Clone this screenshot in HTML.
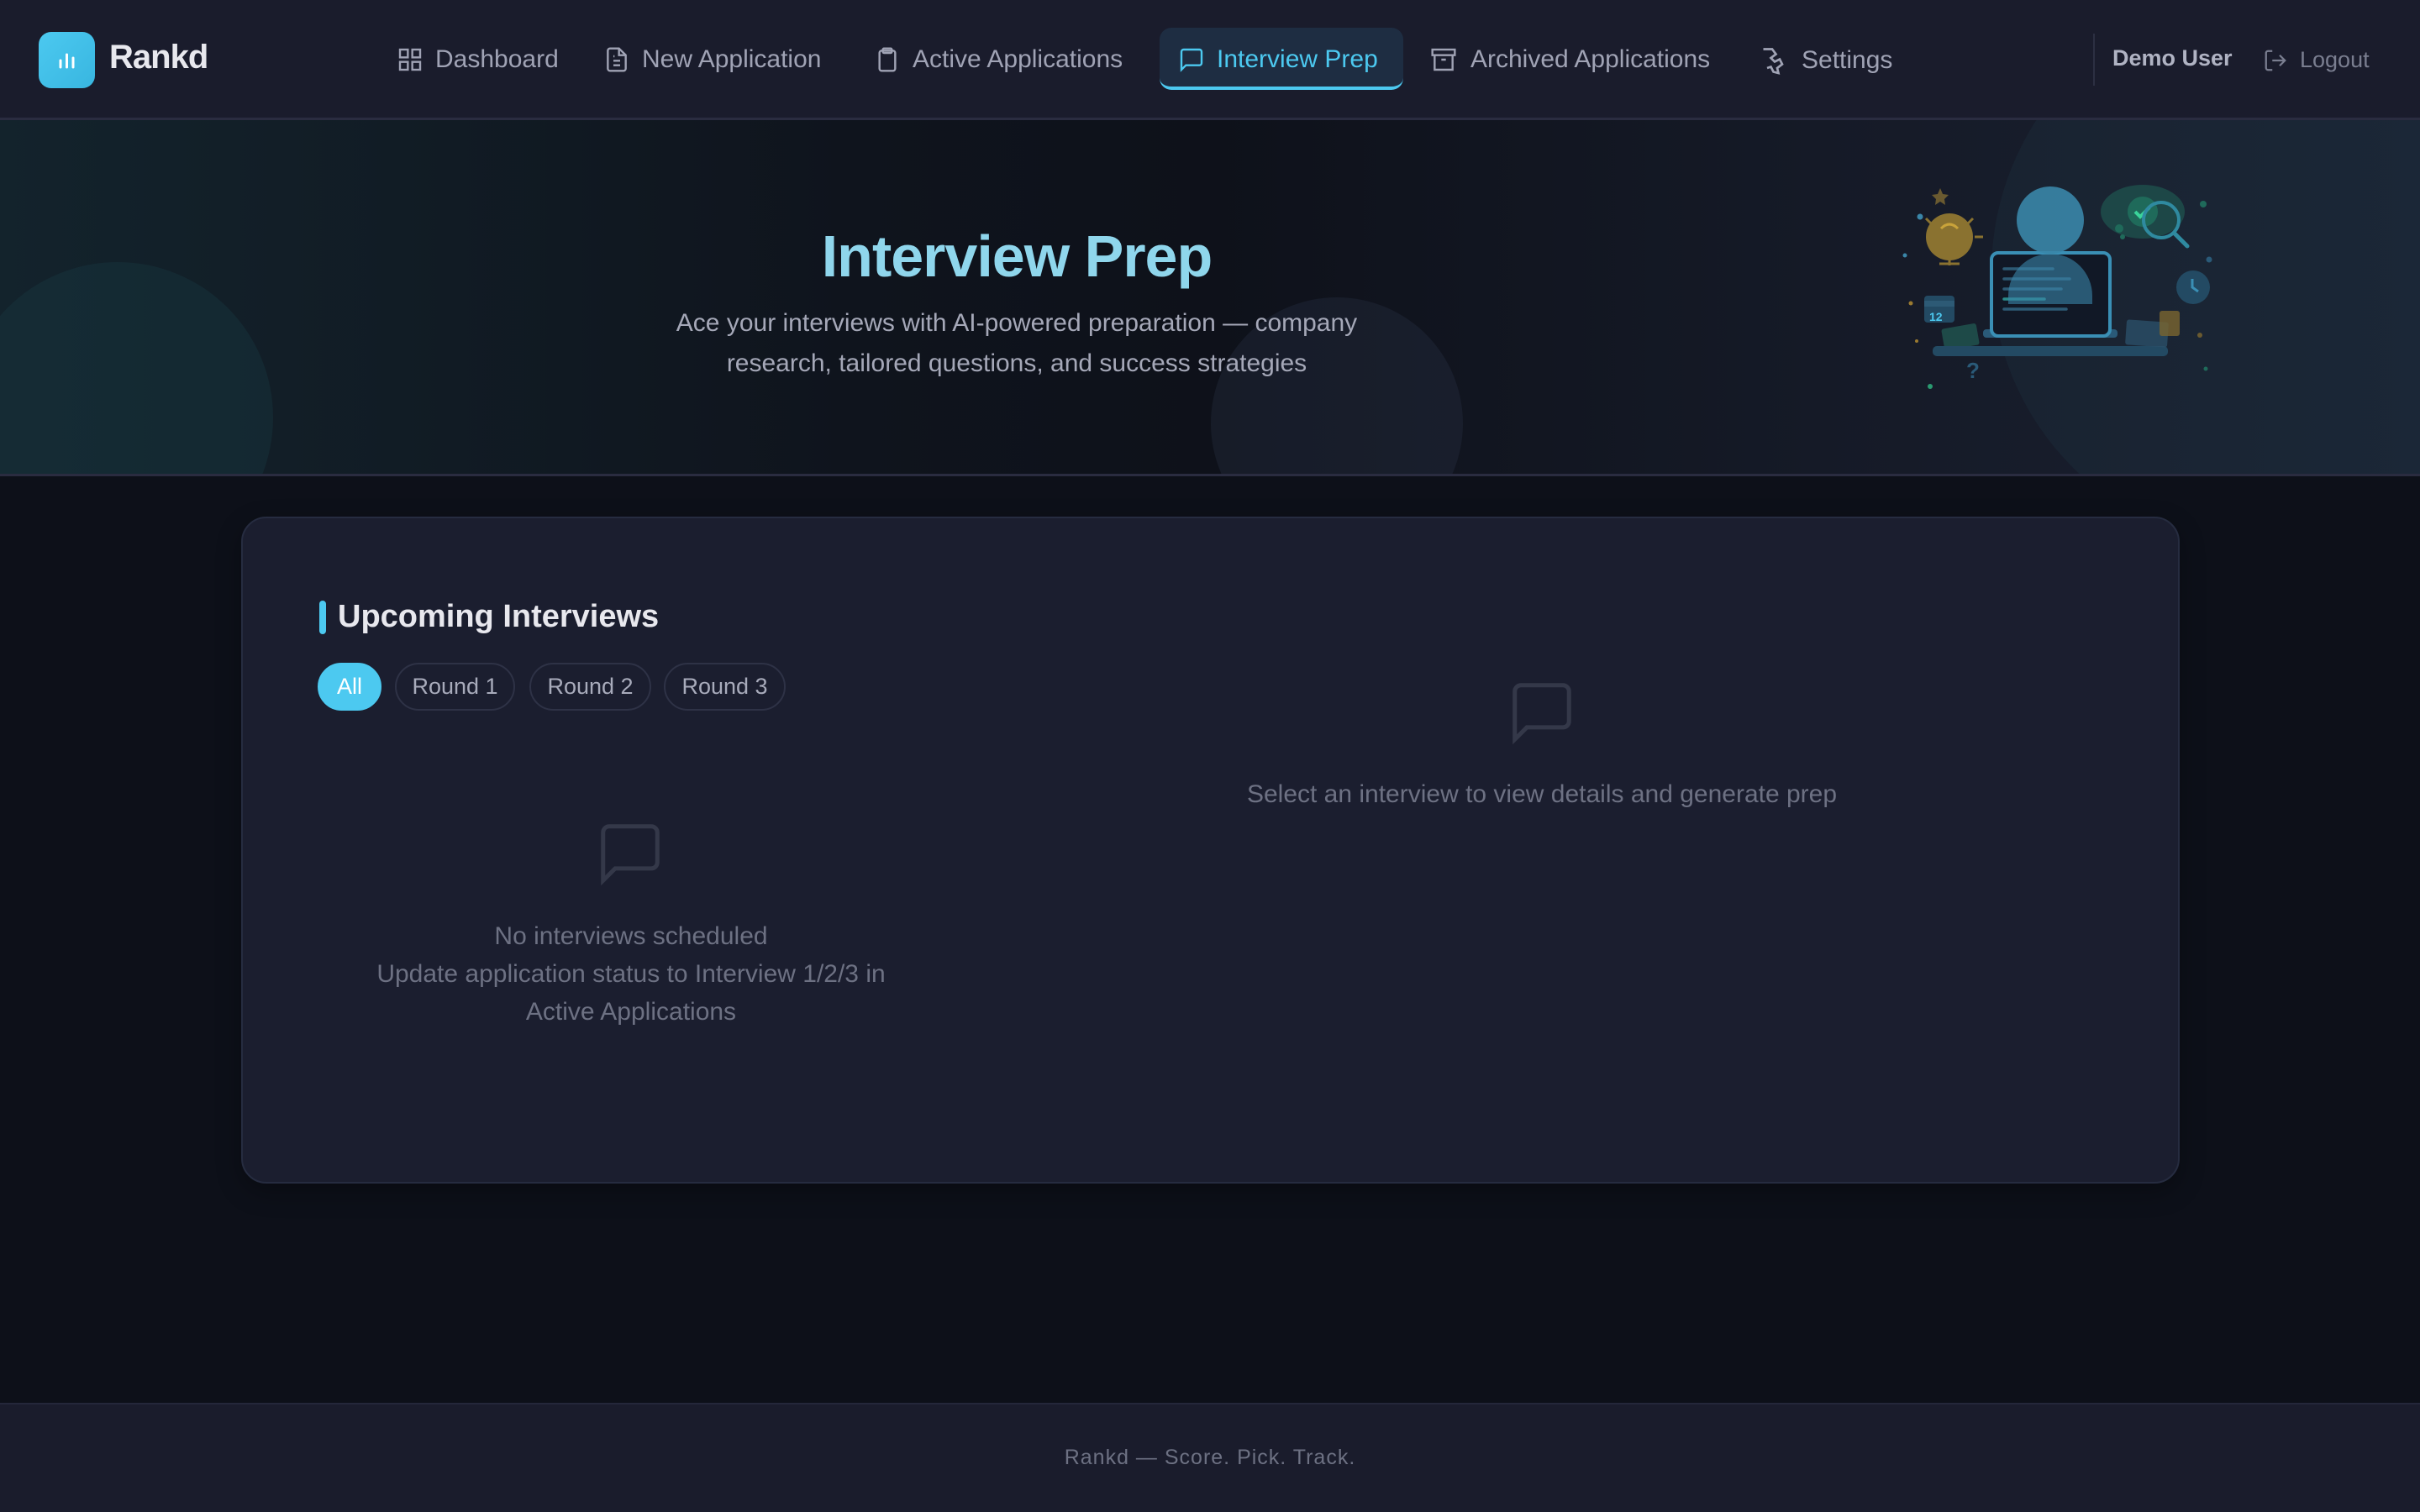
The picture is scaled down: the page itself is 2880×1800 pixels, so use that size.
<!DOCTYPE html>
<html><head><meta charset="utf-8"><style>
*{box-sizing:border-box;margin:0;padding:0}
html,body{width:2880px;height:1800px;overflow:hidden}
body{background:#0d1019;font-family:"Liberation Sans",sans-serif;position:relative;color:#a0a3b5}
.nav{position:absolute;left:0;top:0;width:2880px;height:143px;background:#1a1c2c;border-bottom:3px solid #2a2c40}
.logo{position:absolute;left:46px;top:38px;width:67px;height:67px;border-radius:15px;background:linear-gradient(135deg,#4cc9f0,#38b6e0)}
.brand{position:absolute;left:130px;top:46px;font-size:40px;font-weight:bold;color:#e8e8ee;letter-spacing:-1px}
.ni{position:absolute;top:54px;font-size:30px;color:#a0a3b5;display:flex;align-items:center;white-space:nowrap}
.ni svg{margin-right:14px}
.active{position:absolute;left:1380px;top:33px;width:290px;height:74px;background:#1e2d42;border-radius:14px;border-bottom:4px solid #4cc9f0}
.hero{position:absolute;left:0;top:143px;width:2880px;height:424px;overflow:hidden;background:linear-gradient(90deg,#13232c 0%,#0f141d 35%,#0e111a 50%,#151a27 75%,#1a2030 100%);border-bottom:3px solid #2a2c40}
h1{position:absolute;left:0;width:2420px;text-align:center;top:122px;font-size:70px;font-weight:bold;color:#8fd6ec;letter-spacing:-1px}
.sub{position:absolute;left:750px;width:920px;text-align:center;top:218px;font-size:30px;line-height:48px;color:#a5a8b8}
.card{position:absolute;left:287px;top:615px;width:2307px;height:794px;background:#1b1e2f;border:2px solid #262c40;border-radius:30px;box-shadow:0 10px 30px rgba(0,0,0,.3)}
.h2{position:absolute;left:91px;top:96px;font-size:38px;font-weight:bold;color:#e8e8ee;padding-left:22px}
.h2:before{content:"";position:absolute;left:0;top:2px;width:8px;height:40px;background:#4cc9f0;border-radius:4px}
.pill{position:absolute;top:172px;height:57px;border:2px solid #2e3246;border-radius:29px;font-size:27px;color:#a8abbb;line-height:53px;text-align:center}
.empty{position:absolute;text-align:center;font-size:30px;color:#6d7183;line-height:45px}
.footer{position:absolute;left:0;top:1670px;width:2880px;height:130px;background:#1a1c2c;border-top:2px solid #24273a;text-align:center;font-size:25px;color:#6d7183;line-height:126px;letter-spacing:1px}
</style></head><body>
<div class="nav">
 <div class="logo"><svg width="67" height="67" viewBox="0 0 67 67"><g stroke="#fff" stroke-width="3" stroke-linecap="round"><line x1="26" y1="42" x2="26" y2="34"/><line x1="33.5" y1="42" x2="33.5" y2="27"/><line x1="41" y1="42" x2="41" y2="31"/></g></svg></div>
 <div class="brand">Rankd</div>
 <div class="active"></div>
 <div class="ni" style="left:472px"><svg width="32" height="32" viewBox="0 0 24 24" fill="none" stroke="#a0a3b5" stroke-width="1.8"><rect x="3" y="3" width="7" height="7"/><rect x="14" y="3" width="7" height="7"/><rect x="3" y="14" width="7" height="7"/><rect x="14" y="14" width="7" height="7"/></svg>Dashboard</div>
 <div class="ni" style="left:718px"><svg width="32" height="32" viewBox="0 0 24 24" fill="none" stroke="#a0a3b5" stroke-width="1.8"><path d="M14 2H6a2 2 0 0 0-2 2v16a2 2 0 0 0 2 2h12a2 2 0 0 0 2-2V8z"/><path d="M14 2v6h6M9 13h6M9 17h6M9 9h1"/></svg>New Application</div>
 <div class="ni" style="left:1040px"><svg width="32" height="32" viewBox="0 0 24 24" fill="none" stroke="#a0a3b5" stroke-width="1.8"><rect x="5" y="4" width="14" height="18" rx="2"/><rect x="8" y="2" width="8" height="4" rx="1"/></svg>Active Applications</div>
 <div class="ni" style="left:1402px;color:#4cc9f0"><svg width="32" height="32" viewBox="0 0 24 24" fill="none" stroke="#4cc9f0" stroke-width="1.8"><path d="M21 15a2 2 0 0 1-2 2H7l-4 4V5a2 2 0 0 1 2-2h14a2 2 0 0 1 2 2z"/></svg>Interview Prep</div>
 <div class="ni" style="left:1700px"><svg width="36" height="32" viewBox="0 0 24 24" fill="none" stroke="#a0a3b5" stroke-width="1.8"><rect x="2" y="3" width="20" height="5"/><path d="M4 8v13h16V8M10 12h4"/></svg>Archived Applications</div>
 <div class="ni" style="left:2094px"><svg width="36" height="36" viewBox="0 0 24 24" fill="none" stroke="#a0a3b5" stroke-width="1.8"><path d="M3 3h7l3 4-4 3 3 3 4-2 2 4-4 3 1 4-4-1-2-4-3 1"/></svg>Settings</div>
 <div style="position:absolute;left:2491px;top:40px;width:2px;height:62px;background:#2c2f42"></div>
 <div class="ni" style="left:2514px;font-weight:bold;font-size:27px;color:#b0b3c3;top:54px">Demo User</div>
 <div class="ni" style="left:2693px;font-size:27px;color:#7a7e90;top:56px"><svg width="30" height="30" viewBox="0 0 24 24" fill="none" stroke="#7a7e90" stroke-width="1.8"><path d="M9 21H5a2 2 0 0 1-2-2V5a2 2 0 0 1 2-2h4M16 17l5-5-5-5M21 12H9"/></svg>Logout</div>
</div>
<div class="hero">
 <svg width="2880" height="424" style="position:absolute;left:0;top:0">
  <circle cx="140" cy="354" r="185" fill="rgba(25,60,70,0.35)"/>
  <circle cx="1591" cy="361" r="150" fill="rgba(40,48,70,0.35)"/>
  <circle cx="2700" cy="180" r="330" fill="rgba(40,90,110,0.12)"/>
  <g transform="translate(0,-143)">
   <path d="M2309 224l3 7 7 1-5 5 1 7-6-4-6 4 1-7-5-5 7-1z" fill="#6a5a30"/>
   <circle cx="2320" cy="282" r="28" fill="#8a7230"/>
   <path d="M2310 272q10-10 20 0" stroke="#c9a33a" stroke-width="3" fill="none"/>
   <path d="M2292 260l8 8M2348 260l-8 8M2350 282h10M2308 314h24M2320 306v10" stroke="#8a7230" stroke-width="3"/>
   <circle cx="2285" cy="258" r="3.5" fill="#3a86a8"/><circle cx="2267" cy="304" r="2.5" fill="#3a86a8"/>
   <rect x="2290" y="352" width="36" height="32" rx="4" fill="#234a63"/><rect x="2290" y="358" width="36" height="7" fill="#2d5a75"/>
   <text x="2296" y="382" font-size="14" font-weight="bold" fill="#4cc9f0" font-family="Liberation Sans">12</text>
   <rect x="2312" y="388" width="42" height="26" rx="3" fill="#1e4a48" transform="rotate(-10 2333 401)"/>
   <text x="2340" y="450" font-size="26" font-weight="bold" fill="#2a5a78" font-family="Liberation Sans">?</text>
   <circle cx="2297" cy="460" r="3" fill="#2a9a70"/><circle cx="2274" cy="361" r="2.5" fill="#9a7a30"/><circle cx="2281" cy="406" r="2" fill="#9a7a30"/>
   <rect x="2300" y="412" width="280" height="12" rx="5" fill="#234a63"/>
   <rect x="2360" y="392" width="160" height="10" rx="4" fill="#2a5a78"/>
   <rect x="2370" y="301" width="141" height="99" rx="8" fill="#111826" stroke="#3a8fb5" stroke-width="4"/>
   <g stroke-width="3.5" stroke-linecap="round"><path d="M2385 320h58M2385 332h78M2385 344h68" stroke="#2d5a75"/><path d="M2385 356h48" stroke="#2a8a8a"/><path d="M2385 368h74" stroke="#2d5a75"/></g>
   <circle cx="2440" cy="262" r="40" fill="#3a86a8" opacity=".9"/>
   <path d="M2390 362v-10a50 50 0 0 1 100 0v10z" fill="#3a86a8" opacity=".6"/>
   <ellipse cx="2550" cy="252" rx="50" ry="32" fill="#1d4747"/>
   <circle cx="2550" cy="252" r="18" fill="#1f6a5a"/>
   <path d="M2541 252l6 6 11-11" stroke="#3ad49a" stroke-width="4" fill="none"/>
   <circle cx="2572" cy="262" r="21" stroke="#2f8aa0" stroke-width="4" fill="none"/>
   <path d="M2588 278l15 15" stroke="#2f8aa0" stroke-width="5" stroke-linecap="round"/>
   <circle cx="2522" cy="272" r="5" fill="#1f6a5a"/><circle cx="2526" cy="282" r="3" fill="#1f6a5a"/>
   <circle cx="2622" cy="243" r="4" fill="#1f6a5a"/><circle cx="2629" cy="309" r="3.5" fill="#2a5a78"/>
   <circle cx="2610" cy="342" r="20" fill="#234a63"/><path d="M2609 332v10l7 5" stroke="#3a8fb5" stroke-width="3" fill="none"/>
   <rect x="2530" y="382" width="50" height="30" rx="3" fill="#2a4f68" opacity=".8" transform="rotate(4 2555 397)"/>
   <rect x="2570" y="370" width="24" height="30" rx="3" fill="#7a6530" opacity=".8"/>
   <circle cx="2618" cy="399" r="3" fill="#6a5a30"/><circle cx="2625" cy="439" r="2.5" fill="#1f6a5a"/>
  </g>
 </svg>
 <h1>Interview Prep</h1>
 <div class="sub">Ace your interviews with AI-powered preparation — company research, tailored questions, and success strategies</div>
</div>
<div class="card">
 <div class="h2">Upcoming Interviews</div>
 <div class="pill" style="left:89px;width:76px;background:#4cc9f0;border-color:#4cc9f0;color:#fff">All</div>
 <div class="pill" style="left:181px;width:143px">Round 1</div>
 <div class="pill" style="left:341px;width:145px">Round 2</div>
 <div class="pill" style="left:501px;width:145px">Round 3</div>
 <svg style="position:absolute;left:418px;top:356px" width="86" height="86" viewBox="0 0 24 24" fill="none" stroke="#343849" stroke-width="1.4"><path d="M21 15a2 2 0 0 1-2 2H7l-4 4V5a2 2 0 0 1 2-2h14a2 2 0 0 1 2 2z"/></svg>
 <div class="empty" style="left:91px;width:742px;top:475px">No interviews scheduled<br>Update application status to Interview 1/2/3 in<br>Active Applications</div>
 <svg style="position:absolute;left:1503px;top:188px" width="86" height="86" viewBox="0 0 24 24" fill="none" stroke="#343849" stroke-width="1.4"><path d="M21 15a2 2 0 0 1-2 2H7l-4 4V5a2 2 0 0 1 2-2h14a2 2 0 0 1 2 2z"/></svg>
 <div class="empty" style="left:1046px;width:1000px;top:306px">Select an interview to view details and generate prep</div>
</div>
<div class="footer">Rankd — Score. Pick. Track.</div>
</body></html>
